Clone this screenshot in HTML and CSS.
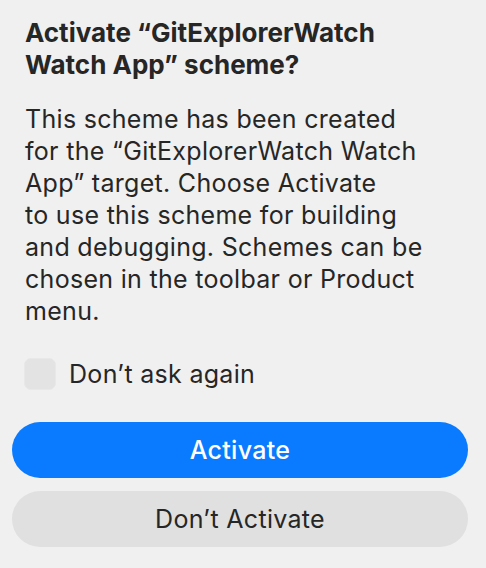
FILE: index.html
```html
<!DOCTYPE html>
<html lang="en">
<head>
    <meta charset="UTF-8">
    <meta name="viewport" content="width=device-width, initial-scale=1.0">
    <title>Activate Scheme</title>
    <link rel="stylesheet" href="styles.css">
</head>
<body>
    <div class="alert">
        <h2 class="alert-title">Activate “GitExplorerWatch<br>Watch App” scheme?</h2>
        <p class="alert-message">This scheme has been created<br>for the “GitExplorerWatch Watch<br>App” target. Choose Activate<br>to use this scheme for building<br>and debugging. Schemes can be<br>chosen in the toolbar or Product<br>menu.</p>
        <label class="suppress">
            <span class="checkbox"></span>
            <span>Don’t ask again</span>
        </label>
        <div class="buttons">
            <button class="btn btn-primary">Activate</button>
            <button class="btn btn-secondary">Don’t Activate</button>
        </div>
    </div>
</body>
</html>
```

FILE: styles.css
```css
* {
    margin: 0;
    padding: 0;
    box-sizing: border-box;
}
html, body {
    height: 100%;
}
body {
    background-color: #f0f0f0;
    font-family: 'Inter', 'Liberation Sans', sans-serif;
    color: #262626;
}
.alert {
    padding: 17px 18px 0 12px;
}
.alert-title {
    font-size: 26px;
    font-weight: 700;
    line-height: 32px;
    padding: 0 13px;
    margin-bottom: 22px;
    white-space: nowrap;
}
.alert-message {
    font-size: 25px;
    line-height: 32px;
    padding: 0 13px;
    white-space: nowrap;
    letter-spacing: 0.3px;
}
.suppress {
    display: flex;
    align-items: center;
    gap: 13px;
    margin: 31px 0 0 12px;
    font-size: 25px;
    letter-spacing: 0.3px;
    height: 32px;
}
.checkbox {
    width: 32px;
    height: 32px;
    border-radius: 7px;
    background-color: #e3e3e3;
    border: 1px solid #e8e8e8;
}
.buttons {
    display: flex;
    flex-direction: column;
    gap: 13px;
    margin-top: 32px;
}
.btn {
    height: 56px;
    border: none;
    border-radius: 28px;
    font-family: inherit;
    font-size: 25px;
    letter-spacing: 0.3px;
    width: 100%;
}
.btn-primary {
    background-color: #0a7bff;
    color: #ffffff;
    font-weight: 500;
}
.btn-secondary {
    background-color: #e0e0e0;
    color: #262626;
}
```
